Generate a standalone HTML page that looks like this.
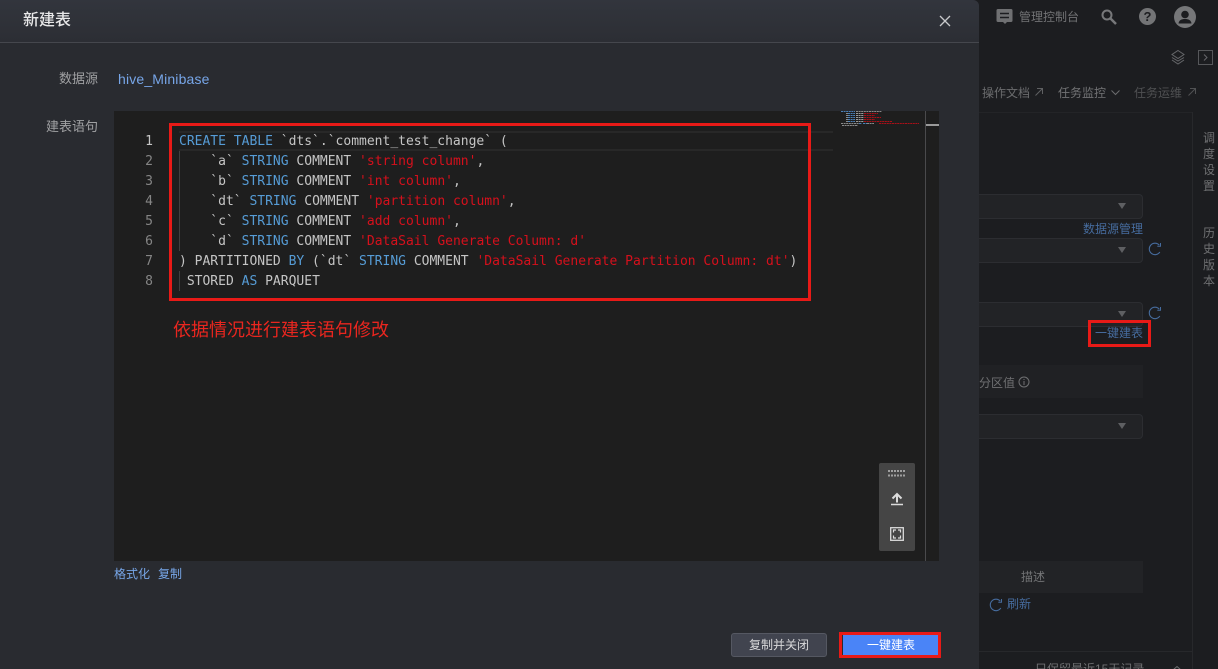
<!DOCTYPE html>
<html lang="zh"><head><meta charset="utf-8"><title>新建表</title>
<style>
html,body{margin:0;padding:0;width:1218px;height:669px;overflow:hidden;background:#1c1d20;}
body{position:relative;font-family:"Liberation Sans","Noto Sans CJK SC",sans-serif;}
.a{position:absolute;white-space:nowrap;}
.t{font-size:12px;line-height:16px;color:#6f7072;}
.sel{position:absolute;left:979px;width:163px;height:23px;background:#222326;border:1px solid #2c2d31;border-left:none;border-radius:0 4px 4px 0;}
.sel i{position:absolute;right:16px;top:8px;width:0;height:0;border-left:4px solid transparent;border-right:4px solid transparent;border-top:6px solid #5e5f62;}
.code{position:absolute;left:179px;font:13px/20px "DejaVu Sans Mono",monospace;color:#c5c5c5;white-space:pre;height:20px;}
.num{position:absolute;left:129px;width:24px;text-align:right;font:13px/20px "DejaVu Sans Mono",monospace;color:#858585;}
.k{color:#569cd6}.s{color:#d6101c}
.red{position:absolute;border:3px solid #e81a17;box-sizing:border-box;}
</style></head><body>
<!-- background page -->
<div class="a t" style="left:1019px;top:9px;color:#727375;">管理控制台</div>
<svg class="a" style="left:995px;top:8px" width="20" height="18" viewBox="0 0 20 18"><path d="M3 1h13a1.500 1.500 0 0 1 1.500 1.500v10a1.500 1.500 0 0 1-1.500 1.500h-4l-2 2-2-2H3a1.500 1.500 0 0 1-1.500-1.500v-10A1.500 1.500 0 0 1 3 1z" fill="#6f7072"/><path d="M5 5.500h9M5 9.500h9" stroke="#1c1d20" stroke-width="1.500"/></svg>
<svg class="a" style="left:1100px;top:8px" width="18" height="18" viewBox="0 0 18 18"><circle cx="7" cy="7" r="4.500" fill="none" stroke="#77787a" stroke-width="2"/><path d="M10.500 10.500L16 16" stroke="#77787a" stroke-width="2.500"/></svg>
<div class="a" style="left:1139px;top:8px;width:17px;height:17px;border-radius:50%;background:#737476;color:#1c1d20;font:bold 13px/17px 'Liberation Sans';text-align:center;">?</div>
<svg class="a" style="left:1174px;top:6px" width="22" height="22" viewBox="0 0 22 22"><circle cx="11" cy="11" r="11" fill="#767779"/><circle cx="11" cy="8.500" r="3.800" fill="#1c1d20"/><path d="M4.500 17.500c.5-3.500 3-4.500 6.500-4.500s6 1 6.500 4.500z" fill="#1c1d20"/></svg>
<svg class="a" style="left:1170px;top:49px" width="16" height="16" viewBox="0 0 16 16" fill="none" stroke="#66676a"><path d="M8 1.500L14 5.500L8 9.500L2 5.500z"/><path d="M2 8.500L8 12L14 8.500M2 11L8 15L14 11"/></svg>
<div class="a" style="left:1198px;top:50px;width:13px;height:13px;border:1px solid #56575a;"></div>
<svg class="a" style="left:1198px;top:50px" width="15" height="15" viewBox="0 0 15 15" fill="none" stroke="#66676a"><path d="M6 4.500L9 7.500L6 10.500"/></svg>
<div class="a" style="left:979px;top:112px;width:214px;height:1px;background:#232427"></div>
<div class="a" style="left:1192px;top:112px;width:1px;height:557px;background:#27282b"></div>
<div class="a" style="left:979px;top:651px;width:213px;height:1px;background:#27282b"></div>
<div class="a t" style="left:982px;top:85px;color:#6b6c6e;">操作文档</div>
<svg class="a" style="left:1034px;top:87px" width="10" height="10" viewBox="0 0 10 10" fill="none" stroke="#5f6062"><path d="M1.500 8.500L8.500 1.500M3 1.500h5.500V7"/></svg>
<div class="a t" style="left:1058px;top:85px;color:#727375;">任务监控</div>
<svg class="a" style="left:1110px;top:89px" width="11" height="8" viewBox="0 0 11 8" fill="none" stroke="#6b6c6e"><path d="M1.500 1.500L5.500 5.500L9.500 1.500"/></svg>
<div class="a t" style="left:1134px;top:85px;color:#4f5052;">任务运维</div>
<svg class="a" style="left:1187px;top:87px" width="10" height="10" viewBox="0 0 10 10" fill="none" stroke="#505153"><path d="M1.500 8.500L8.500 1.500M3 1.500h5.500V7"/></svg>
<div class="a t" style="left:1203px;top:130px;width:13px;white-space:normal;line-height:16px;">调度设置</div>
<div class="a t" style="left:1203px;top:225px;width:13px;white-space:normal;line-height:16px;">历史版本</div>
<div class="sel" style="top:194px;"><i></i></div>
<div class="a t" style="left:1083px;top:221px;color:#466c9e;">数据源管理</div>
<div class="sel" style="top:238px;"><i></i></div>
<div class="sel" style="top:302px;"><i></i></div>
<div class="sel" style="top:414px;"><i></i></div>
<svg class="a" style="left:1148px;top:242px" width="14" height="14" viewBox="0 0 14 14" fill="none" stroke="#466c9e" stroke-width="1.100"><path d="M11.300 3.200A5.700 5.700 0 1 0 11.800 10"/><path d="M12.500 1v3.200H9.300" stroke-width="1"/></svg>
<svg class="a" style="left:1148px;top:306px" width="14" height="14" viewBox="0 0 14 14" fill="none" stroke="#466c9e" stroke-width="1.100"><path d="M11.300 3.200A5.700 5.700 0 1 0 11.800 10"/><path d="M12.500 1v3.200H9.300" stroke-width="1"/></svg>
<div class="a t" style="left:1095px;top:325px;color:#466c9e;">一键建表</div>
<div class="red" style="left:1088px;top:320px;width:63px;height:27px;"></div>
<div class="a" style="left:979px;top:365px;width:164px;height:33px;background:#202124"></div>
<div class="a t" style="left:979px;top:375px;">分区值</div>
<svg class="a" style="left:1018px;top:376px" width="12" height="12" viewBox="0 0 12 12" fill="none" stroke="#6f7072"><circle cx="6" cy="6" r="5"/><path d="M6 5v4M6 3v1"/></svg>
<div class="a" style="left:979px;top:561px;width:164px;height:32px;background:#222326"></div>
<div class="a t" style="left:1021px;top:569px;color:#737476;">描述</div>
<svg class="a" style="left:989px;top:598px" width="14" height="14" viewBox="0 0 14 14" fill="none" stroke="#466c9e" stroke-width="1.100"><path d="M11.300 3.200A5.700 5.700 0 1 0 11.800 10"/><path d="M12.500 1v3.200H9.300" stroke-width="1"/></svg>
<div class="a t" style="left:1007px;top:596px;color:#466c9e;">刷新</div>
<div class="a t" style="left:1035px;top:661px;">只保留最近15天记录</div>
<svg class="a" style="left:1171px;top:665px" width="12" height="6" viewBox="0 0 12 6" fill="none" stroke="#6f7072"><path d="M2 5L6 1.500L10 5"/></svg>

<!-- modal -->
<div class="a" style="left:0;top:0;width:979px;height:669px;background:#292b30;border-radius:0 6px 0 0;"></div>
<div class="a" style="left:0;top:0;width:979px;height:42px;background:linear-gradient(180deg,#32353d 0%,#2c2e34 100%);border-bottom:1px solid #45474d;border-radius:0 6px 0 0;"></div>
<div class="a" style="left:23px;top:10px;font-size:16px;line-height:22px;font-weight:500;color:#e8e8e9;">新建表</div>
<svg class="a" style="left:938px;top:14px" width="14" height="14" viewBox="0 0 14 14" stroke="#c8c9cb" stroke-width="1.300"><path d="M2 2L12 12M12 2L2 12"/></svg>
<div class="a" style="left:59px;top:70px;font-size:13px;line-height:18px;color:#a0a1a3;">数据源</div>
<div class="a" style="left:118px;top:70px;font-size:14px;line-height:18px;letter-spacing:.16px;color:#77a6e8;">hive_Minibase</div>
<div class="a" style="left:46px;top:118px;font-size:13px;line-height:18px;color:#a0a1a3;">建表语句</div>

<!-- editor -->
<div class="a" style="left:114px;top:111px;width:825px;height:450px;background:#1e1e1e;"></div>
<div class="a" style="left:925px;top:111px;width:1px;height:450px;background:#4a4a4c;"></div>
<div class="a" style="left:926px;top:124px;width:13px;height:2px;background:#9a9a9a;"></div>
<div class="a" style="left:179px;top:131px;width:654px;height:16px;border-top:2px solid #282828;border-bottom:2px solid #282828;"></div>
<div class="a" style="left:179px;top:151px;width:1px;height:100px;background:#404040;"></div>
<div class="a" style="left:179px;top:271px;width:1px;height:20px;background:#404040;"></div>

<div class="num" style="top:132px;color:#c6c6c6">1</div>
<div class="num" style="top:152px">2</div>
<div class="num" style="top:172px">3</div>
<div class="num" style="top:192px">4</div>
<div class="num" style="top:212px">5</div>
<div class="num" style="top:232px">6</div>
<div class="num" style="top:252px">7</div>
<div class="num" style="top:272px">8</div>

<div class="code" style="top:132px"><span class="k">CREATE TABLE</span> `dts`.`comment_test_change` (</div>
<div class="code" style="top:152px">    `a` <span class="k">STRING</span> COMMENT <span class="s">'string column'</span>,</div>
<div class="code" style="top:172px">    `b` <span class="k">STRING</span> COMMENT <span class="s">'int column'</span>,</div>
<div class="code" style="top:192px">    `dt` <span class="k">STRING</span> COMMENT <span class="s">'partition column'</span>,</div>
<div class="code" style="top:212px">    `c` <span class="k">STRING</span> COMMENT <span class="s">'add column'</span>,</div>
<div class="code" style="top:232px">    `d` <span class="k">STRING</span> COMMENT <span class="s">'DataSail Generate Column: d'</span></div>
<div class="code" style="top:252px">) PARTITIONED <span class="k">BY</span> (`dt` <span class="k">STRING</span> COMMENT <span class="s">'DataSail Generate Partition Column: dt'</span>)</div>
<div class="code" style="top:272px"> STORED <span class="k">AS</span> PARQUET</div>

<!-- minimap -->
<svg class="a" style="left:841px;top:111px" width="82" height="16" viewBox="0 0 82 16">
<g stroke-width="1" stroke-dasharray="2 .6">
<path d="M0 .5h14" stroke="#4a80b8"/><path d="M15 .5h26" stroke="#8a8a8a"/>
<path d="M5 2.500h2M5 4.500h2M5 6.500h2M5 8.500h2M5 10.500h2" stroke="#8a8a8a"/>
<path d="M7 2.500h7M7 4.500h7M7 6.500h7M7 8.500h7M7 10.500h7" stroke="#4a80b8"/>
<path d="M15 2.500h8M15 4.500h8M15 6.500h8M15 8.500h8M15 10.500h8" stroke="#9a9a9a"/>
<path d="M23 2.500h14M23 4.500h11M23 6.500h17M23 8.500h11M23 10.500h28" stroke="#a81018"/>
<path d="M0 12.500h18M26 12.500h7" stroke="#8a8a8a"/><path d="M18 12.500h3M22 12.500h4" stroke="#4a80b8"/><path d="M38 12.500h40" stroke="#a81018"/>
<path d="M1 14.500h16" stroke="#8a8a8a"/>
</g></svg>

<!-- toolbar -->
<div class="a" style="left:879px;top:463px;width:36px;height:88px;background:#454545;border-radius:2px;"></div>
<svg class="a" style="left:879px;top:463px" width="36" height="88" viewBox="0 0 36 88">
<path d="M9 8h18M9 12.500h18" stroke="#a0a0a0" stroke-width="2" stroke-dasharray="2 1"/>
<path d="M18 39.500V31M13.500 35.500L18 31L22.500 35.500" fill="none" stroke="#dcdcdc" stroke-width="2"/>
<path d="M12 41.500h12" stroke="#dcdcdc" stroke-width="1.500"/>
<rect x="11.700" y="64.700" width="12.600" height="12.600" fill="none" stroke="#dcdcdc" stroke-width="1.300"/>
<path d="M14.500 69.500v-2.500h2.500M19 67h2.500v2.500M21.500 72.500V75H19M17 75h-2.500v-2.500" fill="none" stroke="#dcdcdc" stroke-width="1.200"/>
</svg>

<!-- red annotation -->
<div class="red" style="left:169px;top:123px;width:642px;height:178px;"></div>
<div class="a" style="left:173px;top:318px;font-size:18px;line-height:24px;color:#e9261f;">依据情况进行建表语句修改</div>

<div class="a" style="left:114px;top:566px;font-size:12px;line-height:16px;color:#77a6e8;">格式化</div>
<div class="a" style="left:158px;top:566px;font-size:12px;line-height:16px;color:#77a6e8;">复制</div>

<!-- buttons -->
<div class="a" style="left:731px;top:633px;width:96px;height:24px;box-sizing:border-box;background:#41444f;border:1px solid #555862;border-radius:3px;color:#d8d8da;font-size:12px;line-height:22px;text-align:center;">复制并关闭</div>
<div class="a" style="left:843px;top:635px;width:96px;height:20px;background:#4a84f7;color:#fff;font-size:12px;line-height:20px;text-align:center;">一键建表</div>
<div class="red" style="left:839px;top:632px;width:102px;height:26px;"></div>
</body></html>
